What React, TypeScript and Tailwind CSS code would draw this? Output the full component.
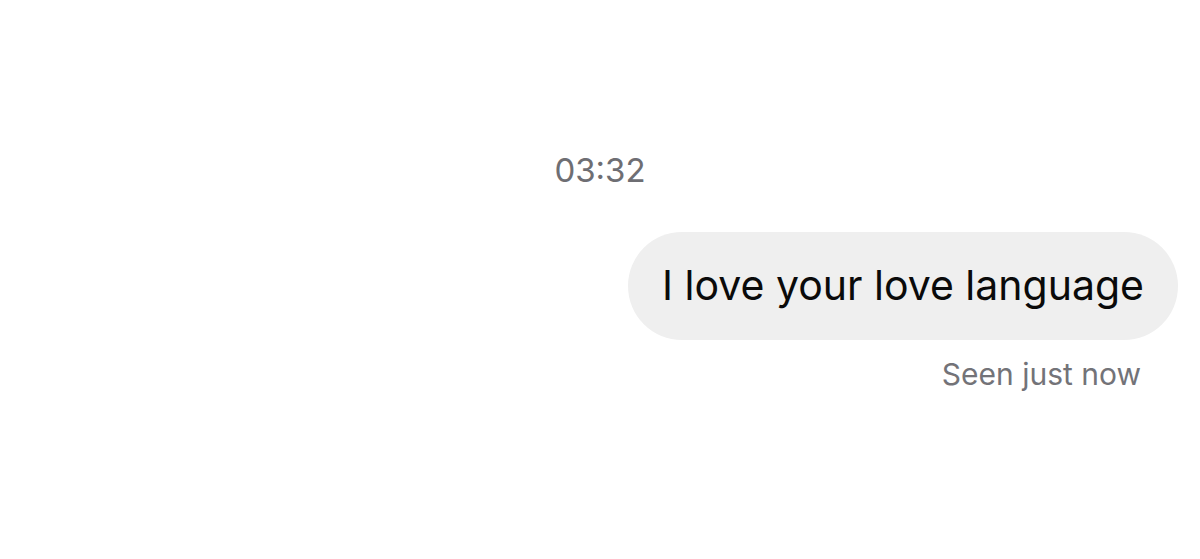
export default function App() {
  return (
    <div className="h-[559px] w-full bg-white font-['Inter',sans-serif]">
      <div className="pt-[151px] text-center text-[33px] leading-[38px] text-[#6e6e73]">03:32</div>
      <div className="mt-[43px] flex justify-end pr-[22px]">
        <div className="flex h-[108px] items-center rounded-full bg-[#efefef] px-[34px] text-[41px] text-[#0a0a0a]">
          I love your love language
        </div>
      </div>
      <div className="mt-[17px] pr-[59px] text-right text-[30px] leading-[34px] text-[#737378]">Seen just now</div>
    </div>
  );
}
